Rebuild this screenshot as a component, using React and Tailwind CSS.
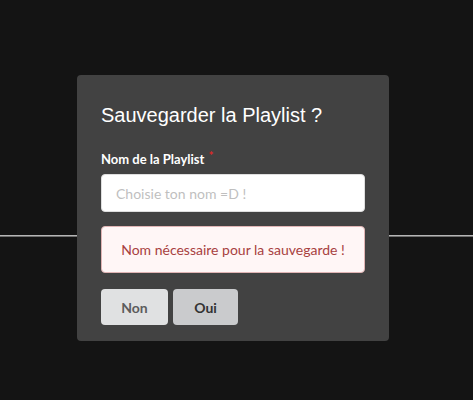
export default function App() {
  return (
    <div className="relative w-[473px] h-[400px] bg-[#141414] overflow-hidden" style={{ fontFamily: "Lato, 'Liberation Sans', sans-serif" }}>
      <div className="pt-[235px]">
        <div className="h-px bg-[#b5b5b5]" />
        <div className="h-px bg-[#6e6e6e]" />
      </div>
      <div className="absolute left-[77px] top-[75px] w-[312px] h-[266px] rounded-[4px] bg-[#424242] px-6 pt-[28px]">
        <h1 className="text-[20px] leading-[24px] text-white" style={{ fontFamily: "'Liberation Sans', Arial, sans-serif" }}>
          Sauvegarder la Playlist ?
        </h1>
        <div className="mt-[24px] text-[13px] leading-[16px] font-bold text-white">
          Nom de la Playlist<span className="ml-1 text-[#db2828] relative -top-[4px] text-[12px]">*</span>
        </div>
        <input
          className="mt-[6px] block w-full h-[38px] rounded-[4px] bg-white border border-[#dedede] px-[14px] text-[14px] text-[#333] placeholder:text-[#bfbfbf] outline-none"
          placeholder="Choisie ton nom =D !"
        />
        <div className="mt-[14px] h-[47px] rounded-[4px] bg-[#fff6f6] border border-[#e0b4b4] flex items-center justify-center text-[14px] text-[#a8413f]">
          Nom nécessaire pour la sauvegarde !
        </div>
        <div className="mt-[16px] flex gap-[5px]">
          <button className="w-[67px] h-[36px] rounded-[4px] bg-[#e0e1e2] text-[14px] font-bold text-[#5c5c5c]">Non</button>
          <button className="w-[65px] h-[36px] rounded-[4px] bg-[#cacbcd] text-[14px] font-bold text-[#333]">Oui</button>
        </div>
      </div>
    </div>
  );
}
